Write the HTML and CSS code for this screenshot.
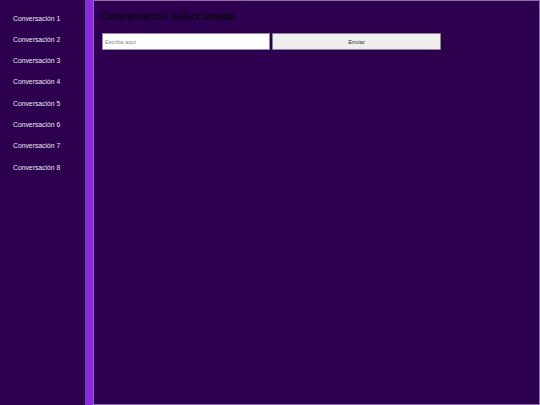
FILE: index.html
```html
<!DOCTYPE html>
<html lang="es">
<head>
<meta charset="utf-8">
<title>Chat</title>
<link rel="stylesheet" href="styles.css">
</head>
<body>
<div class="app">
  <nav class="sidebar">
    <div class="item">Conversación 1</div>
    <div class="item">Conversación 2</div>
    <div class="item">Conversación 3</div>
    <div class="item">Conversación 4</div>
    <div class="item">Conversación 5</div>
    <div class="item">Conversación 6</div>
    <div class="item">Conversación 7</div>
    <div class="item">Conversación 8</div>
  </nav>
  <div class="divider"></div>
  <main class="main">
    <h2 class="title">Conversación seleccionada</h2>
    <form class="composer">
      <input class="field" type="text" placeholder="Escriba aquí">
      <button class="send" type="button">Enviar</button>
    </form>
  </main>
</div>
</body>
</html>
```
FILE: styles.css
```css
html, body {
  margin: 0;
  padding: 0;
  height: 100%;
  background: #2d004f;
  font-family: "Liberation Sans", Arial, sans-serif;
}
.app {
  display: flex;
  height: 405px;
}
.sidebar {
  width: 85px;
  flex: none;
  background: #2d004f;
  padding-top: 7.5px;
  box-sizing: border-box;
}
.item {
  height: 21.3px;
  line-height: 21.3px;
  padding-left: 13px;
  font-size: 6.8px;
  color: #ece6f0;
  white-space: nowrap;
}
.divider {
  width: 8px;
  flex: none;
  background: #8a2be2;
}
.main {
  flex: 1;
  border: 1px solid #8e6ea8;
  background: #2d004f;
  padding: 10px 8px;
  box-sizing: border-box;
}
.title {
  margin: 0;
  font-size: 10.1px;
  line-height: 12px;
  font-weight: bold;
  color: #0b0014;
}
.composer {
  display: flex;
  gap: 2px;
  margin-top: 10px;
}
.field {
  width: 168px;
  height: 17px;
  box-sizing: border-box;
  margin: 0;
  border: 1px solid #9a88a8;
  padding: 0 2px;
  background: #fff;
  font-family: "Liberation Sans", Arial, sans-serif;
  font-size: 5.6px;
  color: #333;
}
.field::placeholder {
  color: #8a8a8a;
}
.send {
  width: 169px;
  height: 17px;
  box-sizing: border-box;
  margin: 0;
  border: 1px solid #8f8496;
  border-radius: 1px;
  background: #efefef;
  font-family: "Liberation Sans", Arial, sans-serif;
  font-size: 5.9px;
  color: #333;
  padding: 0;
}
```
